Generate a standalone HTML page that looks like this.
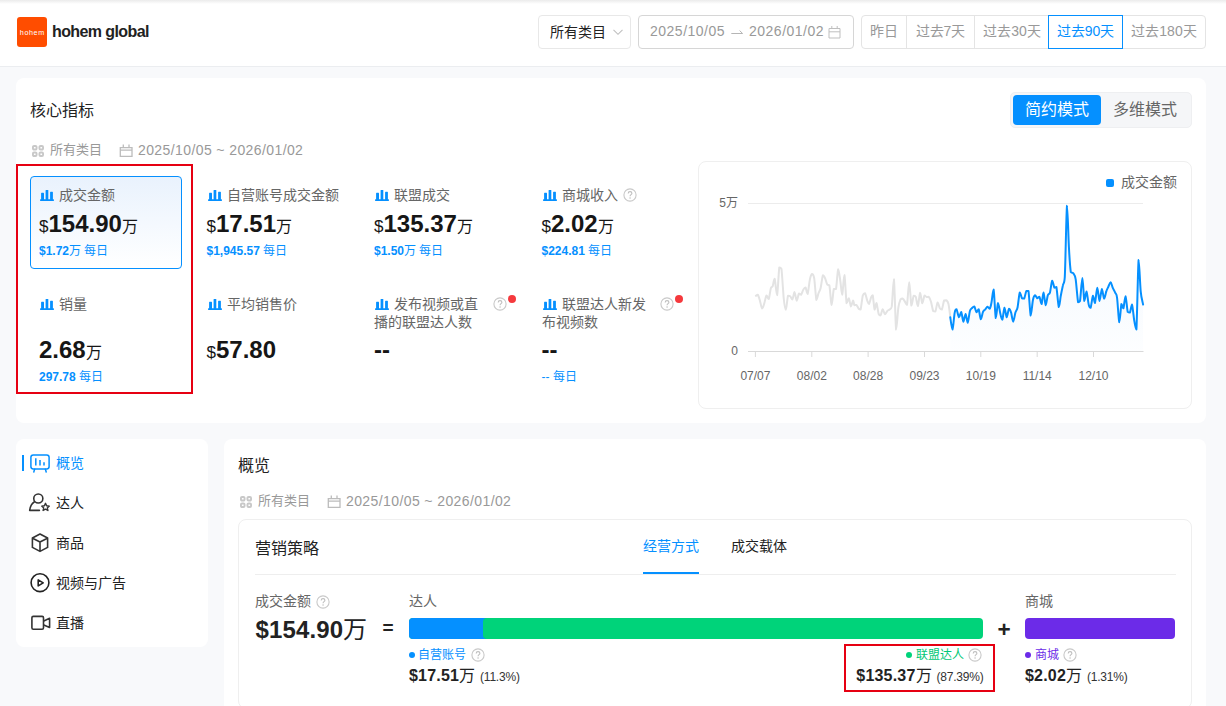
<!DOCTYPE html>
<html lang="zh-CN">
<head>
<meta charset="utf-8">
<title>hohem global</title>
<style>
*{box-sizing:border-box;margin:0;padding:0}
html,body{width:1226px;height:706px;overflow:hidden}
body{position:relative;background:#f8f9fb;font-family:"Liberation Sans",sans-serif;font-size:14px;color:#222;line-height:1}
.abs{position:absolute}
.t{position:absolute;white-space:nowrap;line-height:20px;height:20px}
.card{position:absolute;background:#fff;border-radius:8px}
/* header */
#hdr{position:absolute;left:0;top:0;width:1226px;height:67px;background:#fff;border-bottom:1px solid #ebedf0}
#hdr:before{content:"";position:absolute;left:0;top:0;width:100%;height:4px;background:linear-gradient(#ebebeb,#fff)}
#logo{position:absolute;left:17px;top:17px;width:30px;height:30px;border-radius:3px;background:#ff4d00}
#brand{left:52px;top:22px;font-size:16px;font-weight:bold;color:#222;letter-spacing:-0.6px}
.box{position:absolute;top:15px;height:34px;border:1px solid #e8e8e8;border-radius:4px;background:#fff}
.seg{position:absolute;top:0;height:32px;line-height:30px;text-align:center;color:#999;border-left:1px solid #e4e4e4;font-size:14px}
/* metrics */
.m{position:absolute;width:152px;height:93px}
.m .ic{position:absolute;left:10px;top:14px}
.m .lb{position:absolute;left:29px;top:10px;font-size:14px;line-height:18px;color:#666;white-space:nowrap}
.m .lb2{position:absolute;left:9px;top:10px;font-size:14px;line-height:18px;color:#666;white-space:nowrap}
.m .v{position:absolute;left:9px;font-size:24px;font-weight:bold;color:#161616;white-space:nowrap;line-height:28px}
.m .v i{font-style:normal;font-size:17px;font-weight:normal}
.m .v u{text-decoration:none;font-size:16px;font-weight:normal}
.m .s{position:absolute;left:9px;font-size:12px;color:#0590ff;white-space:nowrap;line-height:14px}
.q{position:absolute;margin:-.5px 0 0 -.5px}
.m .q{margin-top:-1.3px}
.rd{position:absolute;width:8px;height:8px;border-radius:50%;background:#f5393d}
.sub{color:#999}
.nav{position:absolute;left:55.5px;font-size:14px;line-height:20px;color:#222;white-space:nowrap}
</style>
</head>
<body>

<!-- ================= HEADER ================= -->
<div id="hdr">
  <div id="logo"><svg width="30" height="30" viewBox="0 0 30 30"><text x="2.8" y="17.6" font-family="Liberation Sans, sans-serif" font-size="7.2" fill="#fff" textLength="24.4" lengthAdjust="spacing">hohem</text></svg></div>
  <div class="t" id="brand">hohem global</div>

  <div class="box" style="left:538px;width:93px">
    <div class="t" style="left:11px;top:6px;color:#222">所有类目</div>
    <svg class="abs" style="left:73px;top:10px" width="12" height="12" viewBox="0 0 12 12"><path d="M1.5 3.8 L6 8.3 L10.5 3.8" fill="none" stroke="#bfbfbf" stroke-width="1.1"/></svg>
  </div>

  <div class="box" style="left:638px;width:216px;border-color:#d6d6d6">
    <div class="t" style="left:11px;top:5px;color:#999;letter-spacing:.5px">2025/10/05</div>
    <svg class="abs" style="left:92px;top:10px" width="14" height="12" viewBox="0 0 14 12"><path d="M0.3 7.5 H11.6 L8.6 4.6" fill="none" stroke="#b5b5b5" stroke-width="1"/></svg>
    <div class="t" style="left:110px;top:5px;color:#999;letter-spacing:.5px">2026/01/02</div>
    <svg class="abs" style="left:189px;top:8.6px" width="13" height="14" viewBox="0 0 13 14"><path d="M1 3.5 H12 V13 H1 Z M1 6.8 H12 M3.8 1 V4 M9.2 1 V4" fill="none" stroke="#bfbfbf" stroke-width="1"/></svg>
  </div>

  <div class="box" style="left:861px;width:345px;border-color:#e4e4e4">
    <div class="seg" style="left:0;width:44px;border-left:0">昨日</div>
    <div class="seg" style="left:44px;width:68px">过去7天</div>
    <div class="seg" style="left:112px;width:75px">过去30天</div>
    <div class="seg" style="left:261px;width:82px;border-left:0">过去180天</div>
    <div class="abs" style="left:186px;top:-1px;width:75px;height:34px;border:1px solid #0590ff;color:#0590ff;line-height:30px;text-align:center;background:#fff">过去90天</div>
  </div>
</div>

<!-- ================= CORE METRICS CARD ================= -->
<div class="card" style="left:16px;top:78px;width:1190px;height:345px"></div>
<div class="t" style="left:30px;top:100.5px;font-size:16px;color:#222">核心指标</div>

<div class="abs" style="left:1010px;top:92px;width:182px;height:36px;background:#f5f6f8;border:1px solid #eeeff1;border-radius:5px">
  <div class="abs" style="left:2px;top:2px;width:88px;height:30px;border-radius:4px;background:#0590ff;color:#fff;font-size:16px;line-height:30px;text-align:center">简约模式</div>
  <div class="abs" style="left:90px;top:2px;width:88px;height:30px;color:#666;font-size:16px;line-height:30px;text-align:center">多维模式</div>
</div>

<svg class="abs" style="left:32px;top:145px" width="12" height="12" viewBox="0 0 12 12"><g fill="none" stroke="#c8c8c8" stroke-width="1.9"><rect x=".95" y=".95" width="3.6" height="3.6" rx="1.1"/><rect x="7.45" y=".95" width="3.6" height="3.6" rx="1.1"/><rect x=".95" y="7.45" width="3.6" height="3.6" rx="1.1"/><rect x="7.45" y="7.45" width="3.6" height="3.6" rx="1.1"/></g></svg>
<div class="t sub" style="left:50px;top:140px;font-size:13px">所有类目</div>
<svg class="abs" style="left:119px;top:144px" width="14" height="13" viewBox="0 0 14 13"><path d="M1.3 3.6 H13 V12.5 H1.3 Z M1.3 6.2 H13 M4.3 0.6 V3.6 M10 0.6 V3.6" fill="none" stroke="#bcbcbc" stroke-width="1.3"/></svg>
<div class="t sub" style="left:138px;top:140px;letter-spacing:.4px">2025/10/05 ~ 2026/01/02</div>

<!-- metrics row 1 -->
<div class="m" style="left:30px;top:176px;border:1px solid #0590ff;border-radius:4px;background:linear-gradient(#e9f2fd,#fff)">
  <div style="position:absolute;left:-1px;top:-1px;width:152px;height:93px"><svg class="ic" width="14" height="11" viewBox="0 0 14 11"><g fill="#0590ff"><rect x="0" y="9.3" width="14" height="1.6" rx=".6"/><rect x="1.1" y="2.8" width="2.9" height="7.4" rx=".5"/><rect x="5.6" y="0" width="2.7" height="10" rx=".5"/><rect x="10.1" y="1.8" width="2.8" height="8.2" rx=".5"/></g></svg><div class="lb">成交金额</div><div class="v" style="top:34px"><i>$</i>154.90<u>万</u></div><div class="s" style="top:68.2px"><b>$1.72</b>万 每日</div></div>
</div>
<div class="m" style="left:197.5px;top:176px"><svg class="ic" width="14" height="11" viewBox="0 0 14 11"><g fill="#0590ff"><rect x="0" y="9.3" width="14" height="1.6" rx=".6"/><rect x="1.1" y="2.8" width="2.9" height="7.4" rx=".5"/><rect x="5.6" y="0" width="2.7" height="10" rx=".5"/><rect x="10.1" y="1.8" width="2.8" height="8.2" rx=".5"/></g></svg><div class="lb">自营账号成交金额</div><div class="v" style="top:34px"><i>$</i>17.51<u>万</u></div><div class="s" style="top:68.2px"><b>$1,945.57</b> 每日</div></div>
<div class="m" style="left:365px;top:176px"><svg class="ic" width="14" height="11" viewBox="0 0 14 11"><g fill="#0590ff"><rect x="0" y="9.3" width="14" height="1.6" rx=".6"/><rect x="1.1" y="2.8" width="2.9" height="7.4" rx=".5"/><rect x="5.6" y="0" width="2.7" height="10" rx=".5"/><rect x="10.1" y="1.8" width="2.8" height="8.2" rx=".5"/></g></svg><div class="lb">联盟成交</div><div class="v" style="top:34px"><i>$</i>135.37<u>万</u></div><div class="s" style="top:68.2px"><b>$1.50</b>万 每日</div></div>
<div class="m" style="left:532.5px;top:176px"><svg class="ic" width="14" height="11" viewBox="0 0 14 11"><g fill="#0590ff"><rect x="0" y="9.3" width="14" height="1.6" rx=".6"/><rect x="1.1" y="2.8" width="2.9" height="7.4" rx=".5"/><rect x="5.6" y="0" width="2.7" height="10" rx=".5"/><rect x="10.1" y="1.8" width="2.8" height="8.2" rx=".5"/></g></svg><div class="lb">商城收入</div><svg class="q" style="left:91px;top:13px" width="14" height="14" viewBox="0 0 14 14"><circle cx="7" cy="7" r="6.1" fill="none" stroke="#c9c9c9" stroke-width="1.1"/><path d="M5.2 5.5C5.2 4.3 6 3.6 7.05 3.6C8.1 3.6 8.9 4.3 8.9 5.3C8.9 6.6 7.05 6.7 7.05 8.2" fill="none" stroke="#bfbfbf" stroke-width="1.1"/><circle cx="7.05" cy="9.9" r=".75" fill="#bfbfbf"/></svg><div class="v" style="top:34px"><i>$</i>2.02<u>万</u></div><div class="s" style="top:68.2px"><b>$224.81</b> 每日</div></div>

<!-- metrics row 2 -->
<div class="m" style="left:30px;top:285px"><svg class="ic" width="14" height="11" viewBox="0 0 14 11"><g fill="#0590ff"><rect x="0" y="9.3" width="14" height="1.6" rx=".6"/><rect x="1.1" y="2.8" width="2.9" height="7.4" rx=".5"/><rect x="5.6" y="0" width="2.7" height="10" rx=".5"/><rect x="10.1" y="1.8" width="2.8" height="8.2" rx=".5"/></g></svg><div class="lb">销量</div><div class="v" style="top:51px">2.68<u>万</u></div><div class="s" style="top:85px"><b>297.78</b> 每日</div></div>
<div class="m" style="left:197.5px;top:285px"><svg class="ic" width="14" height="11" viewBox="0 0 14 11"><g fill="#0590ff"><rect x="0" y="9.3" width="14" height="1.6" rx=".6"/><rect x="1.1" y="2.8" width="2.9" height="7.4" rx=".5"/><rect x="5.6" y="0" width="2.7" height="10" rx=".5"/><rect x="10.1" y="1.8" width="2.8" height="8.2" rx=".5"/></g></svg><div class="lb">平均销售价</div><div class="v" style="top:51px"><i>$</i>57.80</div></div>
<div class="m" style="left:365px;top:285px"><svg class="ic" width="14" height="11" viewBox="0 0 14 11"><g fill="#0590ff"><rect x="0" y="9.3" width="14" height="1.6" rx=".6"/><rect x="1.1" y="2.8" width="2.9" height="7.4" rx=".5"/><rect x="5.6" y="0" width="2.7" height="10" rx=".5"/><rect x="10.1" y="1.8" width="2.8" height="8.2" rx=".5"/></g></svg><div class="lb">发布视频或直</div><div class="lb2" style="top:28px">播的联盟达人数</div><svg class="q" style="left:128px;top:13px" width="14" height="14" viewBox="0 0 14 14"><circle cx="7" cy="7" r="6.1" fill="none" stroke="#c9c9c9" stroke-width="1.1"/><path d="M5.2 5.5C5.2 4.3 6 3.6 7.05 3.6C8.1 3.6 8.9 4.3 8.9 5.3C8.9 6.6 7.05 6.7 7.05 8.2" fill="none" stroke="#bfbfbf" stroke-width="1.1"/><circle cx="7.05" cy="9.9" r=".75" fill="#bfbfbf"/></svg><div class="rd" style="left:143px;top:10px"></div><div class="v" style="top:51px">--</div></div>
<div class="m" style="left:532.5px;top:285px"><svg class="ic" width="14" height="11" viewBox="0 0 14 11"><g fill="#0590ff"><rect x="0" y="9.3" width="14" height="1.6" rx=".6"/><rect x="1.1" y="2.8" width="2.9" height="7.4" rx=".5"/><rect x="5.6" y="0" width="2.7" height="10" rx=".5"/><rect x="10.1" y="1.8" width="2.8" height="8.2" rx=".5"/></g></svg><div class="lb">联盟达人新发</div><div class="lb2" style="top:28px">布视频数</div><svg class="q" style="left:128px;top:13px" width="14" height="14" viewBox="0 0 14 14"><circle cx="7" cy="7" r="6.1" fill="none" stroke="#c9c9c9" stroke-width="1.1"/><path d="M5.2 5.5C5.2 4.3 6 3.6 7.05 3.6C8.1 3.6 8.9 4.3 8.9 5.3C8.9 6.6 7.05 6.7 7.05 8.2" fill="none" stroke="#bfbfbf" stroke-width="1.1"/><circle cx="7.05" cy="9.9" r=".75" fill="#bfbfbf"/></svg><div class="rd" style="left:142px;top:10px"></div><div class="v" style="top:51px">--</div><div class="s" style="top:85px">-- 每日</div></div>
<!-- red annotation 1 -->
<div class="abs" style="left:16px;top:164px;width:177px;height:230px;border:2px solid #e60012"></div>

<!-- chart -->
<div class="abs" style="left:698px;top:161px;width:494px;height:248px;border:1px solid #efefef;border-radius:8px"></div>
<svg class="abs" style="left:698px;top:161px" width="494" height="248" viewBox="698 161 494 248" font-family="Liberation Sans, sans-serif">
  <defs><linearGradient id="ag" x1="0" y1="0" x2="0" y2="1"><stop offset="0" stop-color="#e4effb"/><stop offset="1" stop-color="#fbfdff"/></linearGradient></defs>
  <path d="M748 203.5H1143" stroke="#ececec" stroke-width="1" fill="none"/>
  <path d="M950.3 317.3C950.6 319.4 951.8 329.5 952.5 329.5C953.2 328.7 954.0 316.2 954.7 312.6C955.3 309.2 955.8 309.2 956.5 309.2C957.2 310.0 958.3 316.9 959.0 317.3C959.8 317.3 960.5 311.9 961.2 311.9C961.9 312.6 962.7 321.3 963.4 321.7C964.1 321.7 964.9 313.9 965.6 313.9C966.3 314.1 967.1 322.8 967.7 322.8C968.4 322.3 969.2 313.7 969.9 311.1C970.6 308.5 971.4 308.8 972.1 308.0C972.8 307.2 973.6 306.4 974.3 306.4C975.0 307.2 975.8 311.8 976.5 312.3C977.2 312.3 978.0 309.2 978.7 309.2C979.3 310.4 980.1 318.7 980.8 319.2C981.5 319.2 982.3 313.6 983.0 311.9C983.7 310.2 984.5 310.4 985.2 309.5C985.9 308.6 986.7 306.9 987.4 306.7C988.1 306.7 988.9 308.8 989.6 308.8C990.2 308.1 990.8 306.3 991.4 303.0C992.1 299.6 992.9 289.6 993.6 289.6C994.3 292.2 995.1 315.8 995.8 318.1C996.5 318.1 997.3 303.9 998.0 303.0C998.7 303.0 999.5 310.0 1000.2 313.0C1000.8 315.9 1001.6 319.7 1002.3 319.7C1003.0 318.7 1003.8 308.1 1004.5 307.7C1005.2 307.7 1006.0 317.1 1006.7 317.3C1007.4 317.3 1008.2 309.6 1008.9 308.8C1009.6 308.8 1010.4 310.4 1011.1 312.6C1011.7 314.9 1012.6 321.7 1013.2 321.7C1013.9 321.7 1014.7 315.2 1015.4 312.6C1016.1 310.1 1016.9 310.7 1017.6 307.2C1018.3 303.7 1019.1 293.9 1019.8 292.4C1020.5 292.4 1021.3 297.2 1022.0 298.3C1022.7 298.6 1023.5 298.6 1024.2 298.6C1024.8 297.4 1025.6 292.5 1026.3 291.1C1027.0 291.1 1027.8 291.1 1028.5 291.1C1029.2 295.4 1030.0 313.9 1030.7 315.5C1031.4 315.5 1032.2 303.7 1032.9 300.2C1033.6 296.6 1034.4 295.5 1035.1 295.2C1035.7 295.2 1036.6 298.0 1037.2 298.3C1037.9 298.3 1038.7 296.8 1039.4 296.8C1040.1 297.8 1041.0 304.1 1041.6 304.1C1042.2 303.3 1042.8 292.4 1043.5 292.4C1044.1 292.6 1045.0 304.7 1045.7 305.2C1046.3 305.2 1047.1 297.4 1047.8 295.2C1048.5 293.0 1049.3 294.9 1050.0 292.4C1050.7 289.9 1051.5 281.5 1052.2 280.7C1052.9 280.7 1053.7 286.6 1054.4 287.7C1055.0 287.7 1055.7 287.0 1056.4 287.0C1057.1 290.4 1058.1 305.4 1058.8 307.0C1059.5 307.0 1060.1 300.0 1060.7 296.2C1061.4 292.4 1062.2 288.7 1062.9 285.4C1063.5 282.0 1064.2 285.4 1064.8 276.9C1065.5 263.0 1066.3 211.1 1067.0 205.8C1067.6 205.8 1068.3 235.2 1068.9 246.8C1069.5 258.4 1070.2 267.5 1070.8 272.1C1071.5 273.3 1072.5 272.1 1073.3 273.3C1074.0 274.6 1074.9 274.3 1075.7 279.3C1076.4 284.4 1077.4 298.4 1078.1 302.2C1078.8 302.2 1079.3 302.2 1080.0 301.0C1080.7 296.8 1081.7 278.1 1082.4 278.1C1083.1 278.1 1083.7 298.7 1084.3 301.0C1085.0 301.0 1085.8 291.4 1086.5 291.4C1087.2 292.0 1088.0 301.8 1088.7 304.6C1089.3 307.5 1089.9 307.8 1090.6 307.8C1091.3 306.2 1092.3 296.6 1093.0 295.7C1093.7 295.7 1094.3 303.0 1094.9 303.0C1095.6 301.6 1096.6 288.1 1097.3 287.8C1098.1 287.8 1098.8 300.8 1099.5 301.0C1100.2 301.0 1101.2 289.4 1101.9 289.0C1102.6 289.0 1103.4 298.2 1104.1 298.6C1104.8 298.6 1105.6 293.5 1106.3 291.4C1106.9 289.3 1107.8 288.2 1108.4 286.6C1109.1 285.0 1109.9 282.2 1110.6 282.2C1111.3 282.4 1112.0 286.0 1112.8 287.8C1113.5 289.6 1114.5 290.8 1115.2 292.6C1115.9 294.4 1116.5 292.9 1117.1 298.1C1117.8 303.3 1118.6 321.2 1119.3 322.2C1120.0 322.2 1120.8 306.4 1121.4 303.9C1122.1 303.9 1122.7 308.3 1123.4 308.3C1124.0 306.9 1124.9 296.2 1125.5 296.2C1126.2 296.8 1127.0 309.0 1127.7 311.9C1128.4 312.6 1129.2 312.6 1129.9 312.6C1130.6 311.3 1131.4 304.6 1132.0 304.6C1132.7 306.0 1133.5 316.0 1134.2 320.3C1134.9 324.6 1135.7 329.5 1136.4 329.5C1137.1 318.9 1137.9 266.7 1138.6 260.1C1139.2 260.1 1140.0 283.6 1140.7 291.4C1141.4 299.2 1142.8 302.3 1143.1 304.6L1143.1 351.5L950.3 351.5Z" fill="url(#ag)" opacity=".55"/>
  <path d="M748 351.5H1143.5M755.4 351.5V357M811.8 351.5V357M868.1 351.5V357M924.5 351.5V357M980.8 351.5V357M1037.2 351.5V357M1093.5 351.5V357" stroke="#d9d9d9" stroke-width="1" fill="none"/>
  <path d="M755.9 295.8C756.2 295.6 757.2 294.7 757.8 294.7C758.4 295.5 759.1 297.8 759.8 300.2C760.5 302.6 761.4 307.9 762.1 308.4C762.9 308.4 763.6 305.6 764.3 303.3C765.0 301.0 765.8 296.2 766.5 295.5C767.2 295.5 768.0 299.1 768.7 299.1C769.4 297.8 770.2 290.3 770.9 288.0C771.5 286.2 772.1 287.8 772.7 286.2C773.3 284.5 773.9 278.7 774.6 278.7C775.3 280.3 776.4 295.2 777.1 295.2C777.8 293.2 778.6 272.0 779.3 267.5C780.0 267.5 780.8 267.5 781.5 269.0C782.1 274.2 783.0 289.9 783.6 297.1C784.3 304.2 785.1 309.8 785.8 309.8C786.5 309.6 787.3 298.2 788.0 295.8C788.7 295.8 789.5 295.8 790.2 296.3C790.9 296.9 791.7 299.4 792.4 299.4C793.1 298.7 793.9 292.1 794.5 292.1C795.2 292.3 796.0 300.4 796.7 300.7C797.4 300.7 798.2 294.7 798.9 293.6C799.6 293.6 800.4 294.7 801.1 294.7C801.8 294.0 802.6 290.9 803.3 289.6C804.0 288.3 804.8 287.4 805.5 287.4C806.1 288.2 806.9 294.0 807.6 294.0C808.3 292.6 809.1 283.4 809.8 279.9C810.5 276.4 811.3 274.3 812.0 274.0C812.7 274.0 813.5 274.0 814.2 278.4C814.9 282.9 815.7 297.3 816.4 299.9C817.0 299.9 817.9 295.3 818.5 293.2C819.2 291.0 820.0 290.9 820.7 287.7C821.4 284.6 822.2 276.9 822.9 275.3C823.6 275.3 824.4 276.7 825.1 278.4C825.8 280.0 826.6 283.4 827.3 284.6C828.0 285.4 828.8 284.6 829.4 285.4C830.1 288.9 830.9 304.2 831.6 304.9C832.3 304.9 833.1 291.7 833.8 289.0C834.5 289.0 835.3 289.0 836.0 289.0C836.7 285.5 837.5 270.6 838.2 269.3C838.9 269.3 839.7 277.0 840.4 281.5C841.0 285.9 841.6 294.7 842.2 294.7C842.9 293.6 843.7 274.9 844.4 274.9C845.1 276.4 845.9 299.2 846.6 303.3C847.3 303.3 848.1 298.3 848.8 298.3C849.5 298.9 850.3 306.0 850.9 306.4C851.6 306.4 852.6 300.7 853.1 300.5C853.7 300.5 853.8 304.4 854.4 305.2C854.9 305.2 855.9 304.9 856.5 304.9C857.2 305.5 858.1 307.9 858.7 308.8C859.4 309.5 860.0 309.5 860.6 309.5C861.2 307.2 862.1 298.4 862.8 295.5C863.5 293.2 864.3 293.2 865.0 293.2C865.6 294.0 866.5 298.3 867.1 300.2C867.8 302.1 868.4 304.1 869.0 304.1C869.6 303.5 870.6 298.6 871.2 297.1C871.8 295.5 872.2 295.2 872.7 295.2C873.3 297.4 874.0 308.2 874.6 309.5C875.2 309.5 875.8 303.0 876.5 303.0C877.1 303.8 878.0 312.0 878.7 314.2C879.3 315.5 879.9 315.5 880.5 315.5C881.2 314.6 882.0 309.4 882.7 309.2C883.4 309.2 884.2 313.9 884.9 314.2C885.6 314.2 886.7 311.6 887.4 310.8C888.1 310.0 888.9 310.3 889.6 309.5C890.3 308.8 891.1 309.5 891.8 306.4C892.4 301.1 893.3 279.2 893.9 279.2C894.6 283.2 895.4 324.4 896.1 329.5C896.8 329.5 897.6 313.2 898.3 308.0C899.0 302.7 899.8 301.0 900.5 299.4C901.2 298.6 902.0 298.6 902.7 298.6C903.4 299.0 904.2 300.3 904.8 301.4C905.5 302.5 906.3 304.9 907.0 304.9C907.7 301.5 908.5 282.3 909.2 282.3C909.9 282.4 910.7 303.3 911.4 305.6C912.1 305.6 912.9 297.4 913.6 295.8C914.3 295.8 915.1 295.8 915.8 296.8C916.4 298.6 917.2 306.1 917.9 306.1C918.6 305.4 919.4 293.2 920.1 292.7C920.8 292.7 921.6 302.8 922.3 303.3C923.0 303.3 923.8 296.6 924.5 295.5C925.2 295.5 926.0 296.8 926.7 297.1C927.3 297.1 928.2 296.8 928.8 296.8C929.5 297.6 930.3 299.2 931.0 301.7C931.7 304.3 932.5 309.4 933.2 311.1C933.9 311.4 934.7 311.4 935.4 311.4C936.1 309.9 936.9 303.1 937.6 302.5C938.3 302.5 939.1 306.7 939.7 308.0C940.4 309.2 941.2 309.5 941.9 309.5C942.6 308.2 943.4 302.1 944.1 300.5C944.8 300.2 945.6 300.2 946.3 300.2C947.0 300.8 947.8 301.1 948.5 304.1C949.1 307.0 950.0 314.7 950.3 317.0" fill="none" stroke="#e3e3e3" stroke-width="2" stroke-linejoin="round" stroke-linecap="round"/>
  <path d="M950.3 317.3C950.6 319.4 951.8 329.5 952.5 329.5C953.2 328.7 954.0 316.2 954.7 312.6C955.3 309.2 955.8 309.2 956.5 309.2C957.2 310.0 958.3 316.9 959.0 317.3C959.8 317.3 960.5 311.9 961.2 311.9C961.9 312.6 962.7 321.3 963.4 321.7C964.1 321.7 964.9 313.9 965.6 313.9C966.3 314.1 967.1 322.8 967.7 322.8C968.4 322.3 969.2 313.7 969.9 311.1C970.6 308.5 971.4 308.8 972.1 308.0C972.8 307.2 973.6 306.4 974.3 306.4C975.0 307.2 975.8 311.8 976.5 312.3C977.2 312.3 978.0 309.2 978.7 309.2C979.3 310.4 980.1 318.7 980.8 319.2C981.5 319.2 982.3 313.6 983.0 311.9C983.7 310.2 984.5 310.4 985.2 309.5C985.9 308.6 986.7 306.9 987.4 306.7C988.1 306.7 988.9 308.8 989.6 308.8C990.2 308.1 990.8 306.3 991.4 303.0C992.1 299.6 992.9 289.6 993.6 289.6C994.3 292.2 995.1 315.8 995.8 318.1C996.5 318.1 997.3 303.9 998.0 303.0C998.7 303.0 999.5 310.0 1000.2 313.0C1000.8 315.9 1001.6 319.7 1002.3 319.7C1003.0 318.7 1003.8 308.1 1004.5 307.7C1005.2 307.7 1006.0 317.1 1006.7 317.3C1007.4 317.3 1008.2 309.6 1008.9 308.8C1009.6 308.8 1010.4 310.4 1011.1 312.6C1011.7 314.9 1012.6 321.7 1013.2 321.7C1013.9 321.7 1014.7 315.2 1015.4 312.6C1016.1 310.1 1016.9 310.7 1017.6 307.2C1018.3 303.7 1019.1 293.9 1019.8 292.4C1020.5 292.4 1021.3 297.2 1022.0 298.3C1022.7 298.6 1023.5 298.6 1024.2 298.6C1024.8 297.4 1025.6 292.5 1026.3 291.1C1027.0 291.1 1027.8 291.1 1028.5 291.1C1029.2 295.4 1030.0 313.9 1030.7 315.5C1031.4 315.5 1032.2 303.7 1032.9 300.2C1033.6 296.6 1034.4 295.5 1035.1 295.2C1035.7 295.2 1036.6 298.0 1037.2 298.3C1037.9 298.3 1038.7 296.8 1039.4 296.8C1040.1 297.8 1041.0 304.1 1041.6 304.1C1042.2 303.3 1042.8 292.4 1043.5 292.4C1044.1 292.6 1045.0 304.7 1045.7 305.2C1046.3 305.2 1047.1 297.4 1047.8 295.2C1048.5 293.0 1049.3 294.9 1050.0 292.4C1050.7 289.9 1051.5 281.5 1052.2 280.7C1052.9 280.7 1053.7 286.6 1054.4 287.7C1055.0 287.7 1055.7 287.0 1056.4 287.0C1057.1 290.4 1058.1 305.4 1058.8 307.0C1059.5 307.0 1060.1 300.0 1060.7 296.2C1061.4 292.4 1062.2 288.7 1062.9 285.4C1063.5 282.0 1064.2 285.4 1064.8 276.9C1065.5 263.0 1066.3 211.1 1067.0 205.8C1067.6 205.8 1068.3 235.2 1068.9 246.8C1069.5 258.4 1070.2 267.5 1070.8 272.1C1071.5 273.3 1072.5 272.1 1073.3 273.3C1074.0 274.6 1074.9 274.3 1075.7 279.3C1076.4 284.4 1077.4 298.4 1078.1 302.2C1078.8 302.2 1079.3 302.2 1080.0 301.0C1080.7 296.8 1081.7 278.1 1082.4 278.1C1083.1 278.1 1083.7 298.7 1084.3 301.0C1085.0 301.0 1085.8 291.4 1086.5 291.4C1087.2 292.0 1088.0 301.8 1088.7 304.6C1089.3 307.5 1089.9 307.8 1090.6 307.8C1091.3 306.2 1092.3 296.6 1093.0 295.7C1093.7 295.7 1094.3 303.0 1094.9 303.0C1095.6 301.6 1096.6 288.1 1097.3 287.8C1098.1 287.8 1098.8 300.8 1099.5 301.0C1100.2 301.0 1101.2 289.4 1101.9 289.0C1102.6 289.0 1103.4 298.2 1104.1 298.6C1104.8 298.6 1105.6 293.5 1106.3 291.4C1106.9 289.3 1107.8 288.2 1108.4 286.6C1109.1 285.0 1109.9 282.2 1110.6 282.2C1111.3 282.4 1112.0 286.0 1112.8 287.8C1113.5 289.6 1114.5 290.8 1115.2 292.6C1115.9 294.4 1116.5 292.9 1117.1 298.1C1117.8 303.3 1118.6 321.2 1119.3 322.2C1120.0 322.2 1120.8 306.4 1121.4 303.9C1122.1 303.9 1122.7 308.3 1123.4 308.3C1124.0 306.9 1124.9 296.2 1125.5 296.2C1126.2 296.8 1127.0 309.0 1127.7 311.9C1128.4 312.6 1129.2 312.6 1129.9 312.6C1130.6 311.3 1131.4 304.6 1132.0 304.6C1132.7 306.0 1133.5 316.0 1134.2 320.3C1134.9 324.6 1135.7 329.5 1136.4 329.5C1137.1 318.9 1137.9 266.7 1138.6 260.1C1139.2 260.1 1140.0 283.6 1140.7 291.4C1141.4 299.2 1142.8 302.3 1143.1 304.6" fill="none" stroke="#0590ff" stroke-width="2" stroke-linejoin="round" stroke-linecap="round"/>
  <g font-size="12" fill="#666"><text x="755.4" y="379.6" text-anchor="middle">07/07</text><text x="811.8" y="379.6" text-anchor="middle">08/02</text><text x="868.1" y="379.6" text-anchor="middle">08/28</text><text x="924.5" y="379.6" text-anchor="middle">09/23</text><text x="980.8" y="379.6" text-anchor="middle">10/19</text><text x="1037.2" y="379.6" text-anchor="middle">11/14</text><text x="1093.5" y="379.6" text-anchor="middle">12/10</text><text x="738" y="207" text-anchor="end">5万</text><text x="738" y="355" text-anchor="end">0</text></g>
  <rect x="1106" y="179" width="8" height="8" rx="2" fill="#0590ff"/>
  <text x="1121" y="187" font-size="14" fill="#666">成交金额</text>
</svg>
<!-- /chart -->
<!-- sidebar -->
<div class="card" style="left:16px;top:439px;width:192px;height:208px"></div>
<div class="abs" style="left:22px;top:455px;width:2px;height:16px;background:#0590ff"></div>
<svg class="abs" style="left:28px;top:452px" width="24" height="182" viewBox="28 452 24 182" fill="none" stroke-linecap="round" stroke-linejoin="round">
  <g stroke="#0590ff" stroke-width="1.5">
    <rect x="30.9" y="454.9" width="18.2" height="14" rx="2.4"/>
    <path d="M35.8 458.2V465.6M40 460V465.6M44 462.2V465.6" stroke-linecap="butt"/>
    <path d="M34.6 469.2L33.8 472M45.4 469.2L46.2 472"/>
  </g>
  <g stroke="#333" stroke-width="1.6">
    <circle cx="38.3" cy="498.5" r="4.55"/>
    <path d="M34.2 502C31.6 503.6 30.2 506.4 29.7 510.4H39.4"/>
    <path d="M45.5 503.3L46.6 505.8L49.3 506.1L47.3 507.9L47.9 510.5L45.5 509.2L43.1 510.5L43.7 507.9L41.7 506.1L44.4 505.8Z" stroke-width="1.4"/>
    <path d="M40 534L47.6 538V547.4L40 551.4L32.4 547.4V538ZM32.6 538.2L40 542L47.4 538.2M40 542V551.2"/>
    <circle cx="40" cy="582.7" r="8.9" stroke="#222" stroke-width="1.6"/>
    <path d="M38.2 579.9V585.9L43.2 582.9Z" stroke="#222"/>
    <rect x="31.9" y="616.4" width="11.6" height="12.8" rx="1.4"/>
    <path d="M43.8 621L49.6 618.3V627.4L43.8 624.9"/>
  </g>
</svg>
<div class="nav" style="top:453px;color:#0590ff">概览</div>
<div class="nav" style="top:493px">达人</div>
<div class="nav" style="top:533px">商品</div>
<div class="nav" style="top:573px">视频与广告</div>
<div class="nav" style="top:613px">直播</div>

<!-- main -->
<div class="card" style="left:224px;top:439px;width:982px;height:300px"></div>
<div class="t" style="left:238px;top:455.5px;font-size:16px;color:#222">概览</div>
<svg class="abs" style="left:240px;top:496px" width="12" height="12" viewBox="0 0 12 12"><g fill="none" stroke="#c8c8c8" stroke-width="1.9"><rect x=".95" y=".95" width="3.6" height="3.6" rx="1.1"/><rect x="7.45" y=".95" width="3.6" height="3.6" rx="1.1"/><rect x=".95" y="7.45" width="3.6" height="3.6" rx="1.1"/><rect x="7.45" y="7.45" width="3.6" height="3.6" rx="1.1"/></g></svg>
<div class="t sub" style="left:258px;top:491px;font-size:13px">所有类目</div>
<svg class="abs" style="left:327px;top:495px" width="14" height="13" viewBox="0 0 14 13"><path d="M1.3 3.6 H13 V12.5 H1.3 Z M1.3 6.2 H13 M4.3 0.6 V3.6 M10 0.6 V3.6" fill="none" stroke="#bcbcbc" stroke-width="1.3"/></svg>
<div class="t sub" style="left:346px;top:491px;letter-spacing:.4px">2025/10/05 ~ 2026/01/02</div>

<div class="abs" style="left:238px;top:519px;width:954px;height:190px;border:1px solid #efefef;border-radius:8px"></div>
<div class="t" style="left:255px;top:538.5px;font-size:16px;color:#222">营销策略</div>
<div class="t" style="left:643px;top:536px;color:#0590ff">经营方式</div>
<div class="t" style="left:731px;top:536px;color:#222">成交载体</div>
<div class="abs" style="left:255px;top:574px;width:921px;height:1px;background:#eee"></div>
<div class="abs" style="left:643px;top:572px;width:56px;height:2px;background:#0590ff"></div>

<div class="t" style="left:255px;top:591px;color:#666">成交金额</div>
<svg class="q" style="left:316px;top:595px" width="14" height="14" viewBox="0 0 14 14"><circle cx="7" cy="7" r="6.1" fill="none" stroke="#c9c9c9" stroke-width="1.1"/><path d="M5.2 5.5C5.2 4.3 6 3.6 7.05 3.6C8.1 3.6 8.9 4.3 8.9 5.3C8.9 6.6 7.05 6.7 7.05 8.2" fill="none" stroke="#bfbfbf" stroke-width="1.1"/><circle cx="7.05" cy="9.9" r=".75" fill="#bfbfbf"/></svg>
<div class="t" style="left:255.5px;top:615.6px;height:28px;line-height:28px;font-size:24px;font-weight:bold;color:#222;letter-spacing:.15px">$154.90<span style="font-weight:normal">万</span></div>
<div class="t" style="left:382.5px;top:616px;height:24px;line-height:24px;font-size:19px;font-weight:bold;color:#222">=</div>

<div class="t" style="left:409px;top:591px;color:#666">达人</div>
<div class="abs" style="left:409px;top:618px;width:574px;height:21px;border-radius:4px;background:#00d37a"></div>
<div class="abs" style="left:409px;top:618px;width:79px;height:21px;border-radius:4px 0 0 4px;background:#0590ff"></div>
<div class="abs" style="left:483px;top:618px;width:10px;height:21px;border-radius:4px 0 0 4px;background:#00d37a"></div>
<div class="abs" style="left:409px;top:652px;width:6px;height:6px;border-radius:50%;background:#0590ff"></div>
<div class="t" style="left:418px;top:645px;font-size:12px;color:#0590ff">自营账号</div>
<svg class="q" style="left:471px;top:648px" width="14" height="14" viewBox="0 0 14 14"><circle cx="7" cy="7" r="6.1" fill="none" stroke="#c9c9c9" stroke-width="1.1"/><path d="M5.2 5.5C5.2 4.3 6 3.6 7.05 3.6C8.1 3.6 8.9 4.3 8.9 5.3C8.9 6.6 7.05 6.7 7.05 8.2" fill="none" stroke="#bfbfbf" stroke-width="1.1"/><circle cx="7.05" cy="9.9" r=".75" fill="#bfbfbf"/></svg>
<div class="t" style="left:409px;top:666px;font-size:16px;font-weight:bold;color:#222;letter-spacing:.2px">$17.51<span style="font-weight:normal">万</span> <span style="font-size:12px;font-weight:normal;color:#333;letter-spacing:-.2px">(11.3%)</span></div>

<div class="abs" style="left:906px;top:652px;width:6px;height:6px;border-radius:50%;background:#00d37a"></div>
<div class="t" style="left:915.5px;top:645px;font-size:12px;color:#00c776">联盟达人</div>
<svg class="q" style="left:968.5px;top:648px" width="14" height="14" viewBox="0 0 14 14"><circle cx="7" cy="7" r="6.1" fill="none" stroke="#c9c9c9" stroke-width="1.1"/><path d="M5.2 5.5C5.2 4.3 6 3.6 7.05 3.6C8.1 3.6 8.9 4.3 8.9 5.3C8.9 6.6 7.05 6.7 7.05 8.2" fill="none" stroke="#bfbfbf" stroke-width="1.1"/><circle cx="7.05" cy="9.9" r=".75" fill="#bfbfbf"/></svg>
<div class="t" style="right:242.5px;top:666px;font-size:16px;font-weight:bold;color:#222;letter-spacing:.2px">$135.37<span style="font-weight:normal">万</span> <span style="font-size:12px;font-weight:normal;color:#333;letter-spacing:-.2px">(87.39%)</span></div>
<div class="abs" style="left:844px;top:644px;width:151px;height:48px;border:2px solid #e60012"></div>

<div class="t" style="left:997.5px;top:618px;height:24px;line-height:24px;font-size:22.5px;font-weight:bold;color:#222">+</div>
<div class="t" style="left:1025px;top:591px;color:#666">商城</div>
<div class="abs" style="left:1025px;top:618px;width:150px;height:21px;border-radius:4px;background:#6c2be8"></div>
<div class="abs" style="left:1025px;top:652px;width:6px;height:6px;border-radius:50%;background:#6c2be8"></div>
<div class="t" style="left:1034.5px;top:645px;font-size:12px;color:#6c2be8">商城</div>
<svg class="q" style="left:1063.5px;top:648px" width="14" height="14" viewBox="0 0 14 14"><circle cx="7" cy="7" r="6.1" fill="none" stroke="#c9c9c9" stroke-width="1.1"/><path d="M5.2 5.5C5.2 4.3 6 3.6 7.05 3.6C8.1 3.6 8.9 4.3 8.9 5.3C8.9 6.6 7.05 6.7 7.05 8.2" fill="none" stroke="#bfbfbf" stroke-width="1.1"/><circle cx="7.05" cy="9.9" r=".75" fill="#bfbfbf"/></svg>
<div class="t" style="left:1025px;top:666px;font-size:16px;font-weight:bold;color:#222;letter-spacing:.2px">$2.02<span style="font-weight:normal">万</span> <span style="font-size:12px;font-weight:normal;color:#333;letter-spacing:-.2px">(1.31%)</span></div>


</body>
</html>
